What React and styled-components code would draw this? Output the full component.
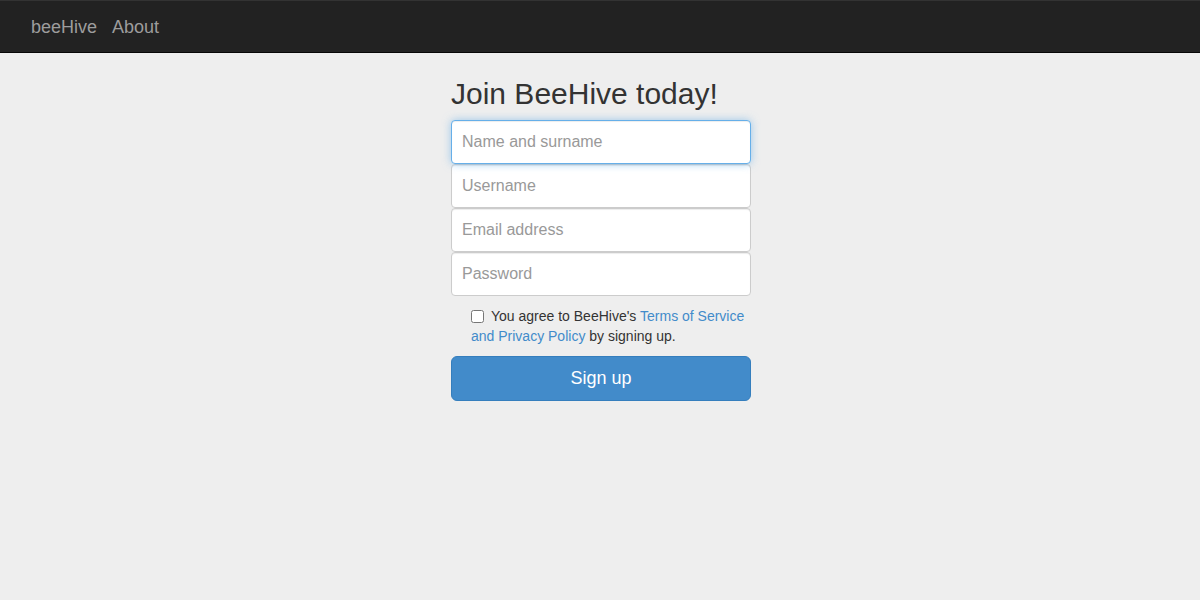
import React from "react";
import styled, { createGlobalStyle, css } from "styled-components";

const Global = createGlobalStyle`
  html, body { margin: 0; padding: 0; }
  body {
    background: #eeeeee;
    font-family: "Liberation Sans", Arial, Helvetica, sans-serif;
    font-size: 14px;
    line-height: 1.428571;
    color: #333333;
  }
  * { box-sizing: border-box; }
`;

const NavBar = styled.nav`
  background: #222222;
  border-top: 1px solid #333333;
  border-bottom: 1px solid #080808;
  height: 53px;
  display: flex;
  align-items: center;
  gap: 15px;
  padding: 1px 31px 0;
`;

const NavLink = styled.a`
  color: #9d9d9d;
  font-size: 18px;
  line-height: 20px;
  padding: 15px 0;
  text-decoration: none;
`;

const Main = styled.main`
  display: flex;
  justify-content: center;
  padding: 24px 0 0 2px;
`;

const Form = styled.form`
  width: 300px;
  display: flex;
  flex-direction: column;
`;

const Heading = styled.h2`
  font-size: 30px;
  font-weight: 500;
  line-height: 1.1;
  margin: 0 0 10px;
  color: #333333;
`;

const Input = styled.input`
  display: block;
  width: 100%;
  height: 44px;
  padding: 10px;
  font-family: inherit;
  font-size: 16px;
  line-height: 1.428571;
  color: #555555;
  background: #ffffff;
  border: 1px solid #cccccc;
  border-radius: 4px;
  box-shadow: inset 0 1px 1px rgba(0, 0, 0, 0.075);
  outline: none;
  &::placeholder { color: #999999; }
  ${(p) =>
    p.$active &&
    css`
      border-color: #66afe9;
      box-shadow: inset 0 1px 1px rgba(0, 0, 0, 0.075), 0 0 8px rgba(102, 175, 233, 0.6);
      position: relative;
      z-index: 1;
    `}
`;

const Agree = styled.label`
  display: block;
  margin: 10px 0;
  padding-left: 20px;
  font-size: 14px;
  line-height: 20px;
  color: #333333;
`;

const Check = styled.input`
  width: 13px;
  height: 13px;
  margin: 0 7px 0 0;
  vertical-align: -2px;
`;

const Link = styled.a`
  color: #428bca;
  text-decoration: none;
`;

const Button = styled.button`
  display: block;
  width: 100%;
  height: 45px;
  padding: 9px 16px;
  font-family: inherit;
  font-size: 18px;
  line-height: 1.33;
  color: #ffffff;
  background: #428bca;
  border: 1px solid #357ebd;
  border-radius: 6px;
  cursor: pointer;
`;

export default function App() {
  return (
    <>
      <Global />
      <NavBar>
        <NavLink href="#">beeHive</NavLink>
        <NavLink href="#">About</NavLink>
      </NavBar>
      <Main>
        <Form onSubmit={(e) => e.preventDefault()}>
          <Heading>Join BeeHive today!</Heading>
          <Input $active autoFocus type="text" placeholder="Name and surname" />
          <Input type="text" placeholder="Username" />
          <Input type="email" placeholder="Email address" />
          <Input type="password" placeholder="Password" />
          <Agree>
            <Check type="checkbox" />
            You agree to BeeHive's <Link href="#">Terms of Service and Privacy Policy</Link> by signing up.
          </Agree>
          <Button type="submit">Sign up</Button>
        </Form>
      </Main>
    </>
  );
}
